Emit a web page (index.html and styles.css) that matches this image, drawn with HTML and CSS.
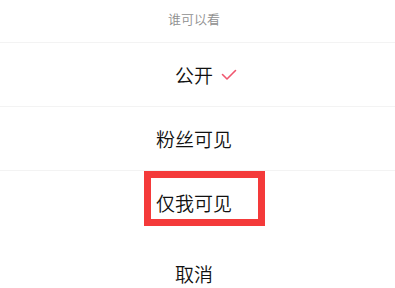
FILE: index.html
```html
<!DOCTYPE html>
<html lang="zh-CN">
<head>
<meta charset="utf-8">
<link rel="stylesheet" href="styles.css">
</head>
<body>
<div class="sheet">
  <div class="title">谁可以看</div>
  <div class="row"><span class="label">公开<svg class="check" width="16" height="12" viewBox="0 0 16 12"><polyline points="1.5,5.5 6,10 14.5,1.5" fill="none" stroke="#f0576f" stroke-width="1.6" stroke-linecap="round" stroke-linejoin="round"/></svg></span></div>
  <div class="row"><span class="label">粉丝可见</span></div>
  <div class="row last"><span class="label">仅我可见</span><div class="highlight"></div></div>
  <div class="cancel"><span class="label">取消</span></div>
</div>
</body>
</html>
```
FILE: styles.css
```css
html, body {
  margin: 0;
  padding: 0;
  background: #fff;
}
body {
  width: 395px;
  height: 288px;
  overflow: hidden;
  font-family: "Noto Sans CJK SC", "Noto Sans", sans-serif;
}
.sheet {
  display: flex;
  flex-direction: column;
}
.title {
  height: 43px;
  box-sizing: border-box;
  padding: 10px 7px 0 0;
  line-height: 18px;
  font-size: 13px;
  font-weight: 350;
  color: #8f8f8f;
  text-align: center;
  border-bottom: 1px solid #f3f3f3;
}
.row {
  position: relative;
  height: 64px;
  box-sizing: border-box;
  display: flex;
  align-items: center;
  justify-content: center;
  padding-right: 7px;
  border-bottom: 1px solid #f3f3f3;
}
.row.last {
  border-bottom: none;
  height: 63px;
}
.label {
  position: relative;
  font-size: 19px;
  font-weight: 350;
  line-height: 24px;
  color: #111;
}
.check {
  position: absolute;
  left: calc(100% + 8px);
  top: 6px;
}
.highlight {
  position: absolute;
  left: 144px;
  top: 0;
  width: 121px;
  height: 55px;
  box-sizing: border-box;
  border: 7px solid #f43a3a;
}
.cancel {
  height: 54px;
  box-sizing: border-box;
  padding: 28px 7px 0 0;
  display: flex;
  align-items: flex-start;
  justify-content: center;
}
```
